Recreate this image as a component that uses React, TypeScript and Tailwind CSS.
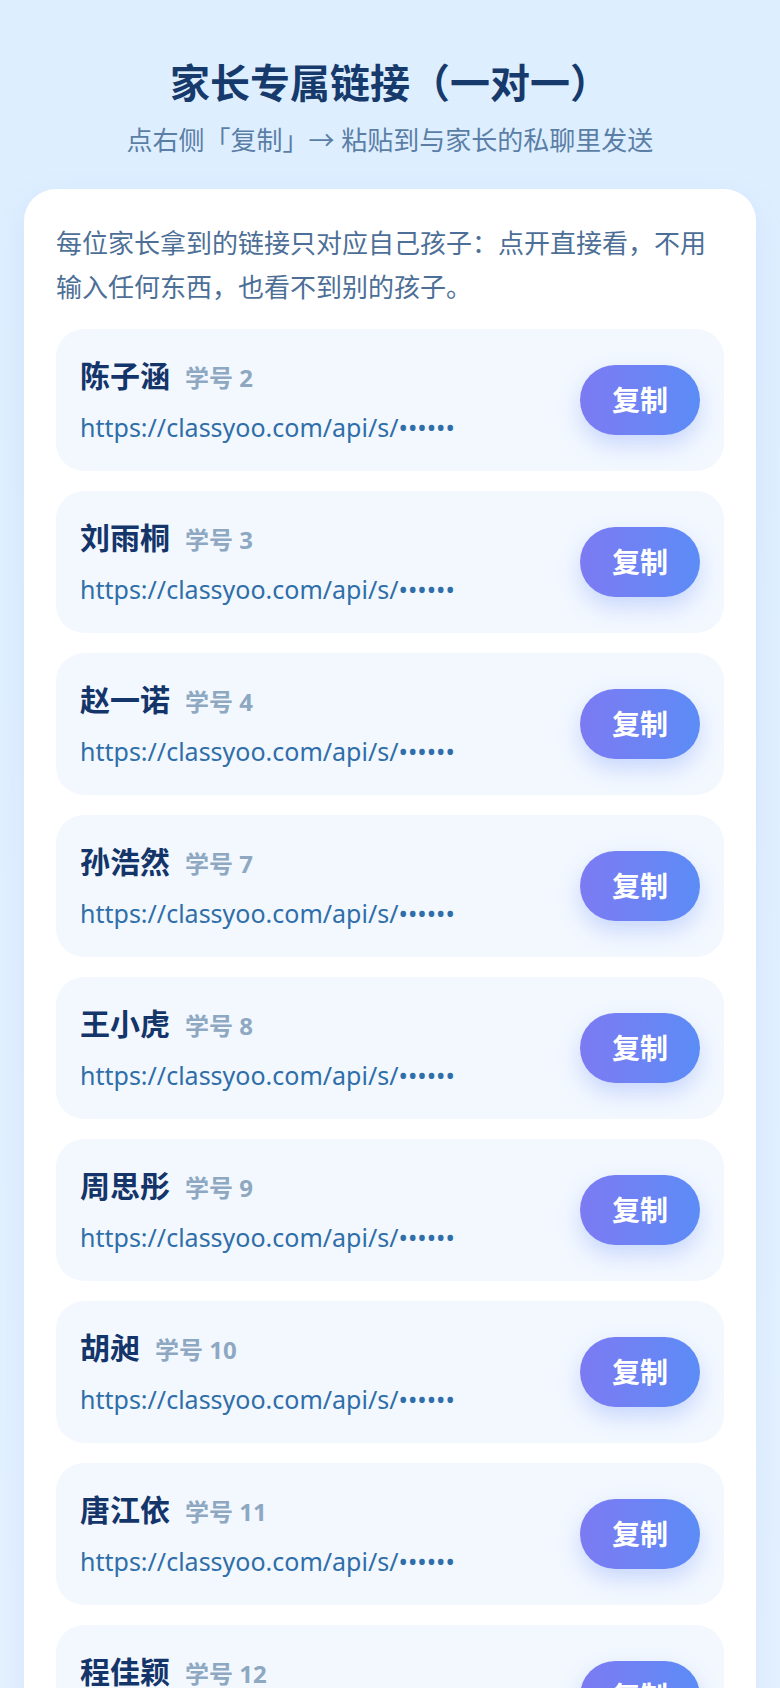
import React from "react";

type Student = { name: string; no: number };

const students: Student[] = [
  { name: "陈子涵", no: 2 },
  { name: "刘雨桐", no: 3 },
  { name: "赵一诺", no: 4 },
  { name: "孙浩然", no: 7 },
  { name: "王小虎", no: 8 },
  { name: "周思彤", no: 9 },
  { name: "胡昶", no: 10 },
  { name: "唐江依", no: 11 },
  { name: "程佳颖", no: 12 },
];

const font = { fontFamily: '"Noto Sans", "Noto Sans CJK SC", sans-serif' };

export default function App() {
  return (
    <div
      style={font}
      className="min-h-screen bg-gradient-to-b from-[#ddeeff] to-[#e4f1ff] px-6 pt-[57px]"
    >
      {/* Header */}
      <div className="text-center">
        <h1 className="text-[40px] leading-[1.3] font-bold text-[#163a6b]">
          家长专属链接（一对一）
        </h1>
        <p className="mt-[12px] text-[26px] leading-[1.5] text-[#5b7ea6]">
          点右侧「复制」→ 粘贴到与家长的私聊里发送
        </p>
      </div>

      {/* Card */}
      <div className="mt-[29px] rounded-[32px] bg-white px-8 pt-8 pb-8 shadow-[0_10px_30px_rgba(120,160,220,0.12)]">
        <p className="text-[26px] leading-[44px] text-[#4d6f97]">
          每位家长拿到的链接只对应自己孩子：点开直接看，不用输入任何东西，也看不到别的孩子。
        </p>

        <div className="mt-5 flex flex-col gap-5">
          {students.map((s) => (
            <div
              key={s.no}
              className="flex h-[142px] items-center justify-between rounded-[28px] bg-[#f3f8ff] px-6"
            >
              <div className="min-w-0">
                <div className="flex items-baseline gap-[15px]">
                  <span className="text-[30px] leading-[39px] font-bold text-[#14356a]">
                    {s.name}
                  </span>
                  <span className="text-[24px] leading-[39px] font-bold text-[#8ea8c2]">
                    学号 {s.no}
                  </span>
                </div>
                <div className="mt-[14px] text-[25px] leading-[33px] text-[#2f6ea8]">
                  https://classyoo.com/api/s/••••••
                </div>
              </div>
              <button className="flex h-[70px] w-[120px] flex-shrink-0 items-center justify-center rounded-full bg-gradient-to-r from-[#7c7af2] to-[#5b8cf6] text-[28px] font-bold text-white shadow-[0_10px_22px_rgba(91,130,246,0.28)]">
                复制
              </button>
            </div>
          ))}
        </div>
      </div>
    </div>
  );
}
